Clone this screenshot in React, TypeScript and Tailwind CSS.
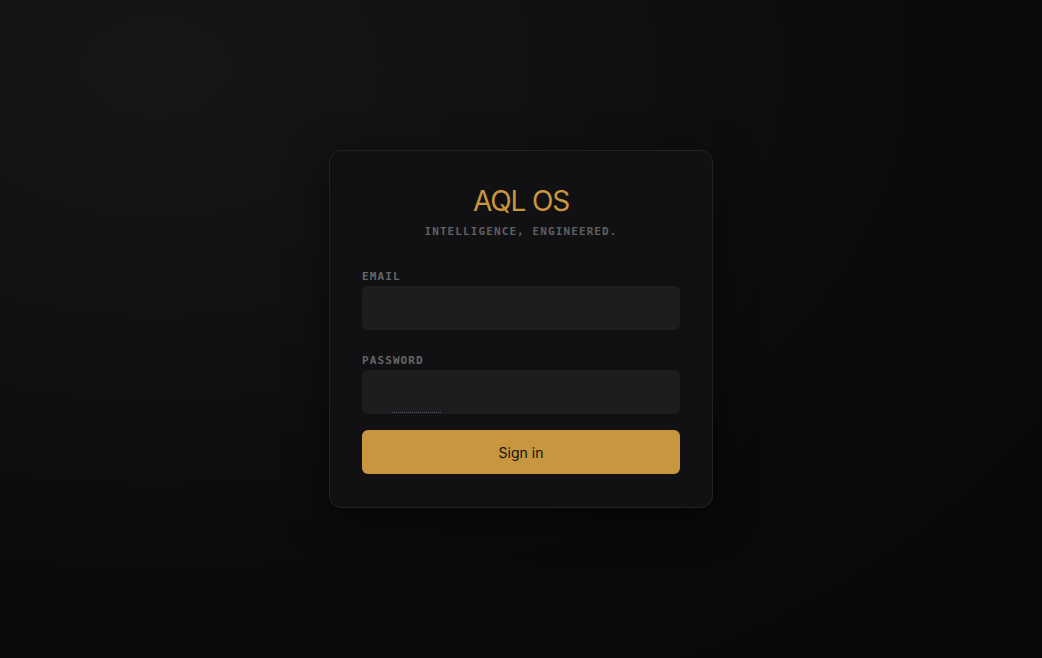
import React from "react";

const mono = { fontFamily: "'DejaVu Sans Mono', 'Liberation Mono', monospace" };

export default function App() {
  return (
    <div
      className="min-h-[658px] w-full flex items-center justify-center bg-[#09090b] bg-[radial-gradient(ellipse_at_15%_10%,#161618_0%,#111113_30%,#0a0a0c_65%,#08080a_100%)]"
      style={{ fontFamily: "Inter, 'Noto Sans', sans-serif" }}
    >
      <div className="w-[384px] rounded-[12px] border border-[#222225] bg-[#111113] px-[32px] pt-[32px] pb-[33px] shadow-[0_10px_40px_rgba(0,0,0,0.5)]">
        <div className="flex flex-col items-center">
          <h1 className="text-[28px] leading-[36px] tracking-[-0.04em] text-[#c9963f] font-normal">AQL OS</h1>
          <p className="mt-[5px] text-[11px] leading-[16px] tracking-[0.1em] font-bold text-[#5f5f61]" style={mono}>
            INTELLIGENCE, ENGINEERED.
          </p>
        </div>
        <form className="mt-[29px] flex flex-col" onSubmit={(e) => e.preventDefault()}>
          <label className="block text-[11px] leading-[16px] tracking-[0.1em] font-bold text-[#666668]" style={mono}>
            EMAIL
          </label>
          <input
            type="email"
            className="mt-[1px] h-[44px] w-full rounded-[6px] bg-[#1d1d20] px-3 text-sm text-[#ddd] outline-none"
          />
          <label className="mt-[23px] block text-[11px] leading-[16px] tracking-[0.1em] font-bold text-[#666668]" style={mono}>
            PASSWORD
          </label>
          <div className="relative mt-[1px]">
            <input
              type="password"
              className="h-[44px] w-full rounded-[6px] bg-[#1d1d20] px-3 text-sm text-[#ddd] outline-none"
            />
            <div className="absolute left-[30px] bottom-[1px] w-[49px] border-b border-dotted border-[#55555a]" />
          </div>
          <button
            type="submit"
            className="mt-[16px] h-[44px] w-full rounded-[6px] bg-[#c8963e] text-[14px] text-[#111111]"
          >
            Sign in
          </button>
        </form>
      </div>
    </div>
  );
}
